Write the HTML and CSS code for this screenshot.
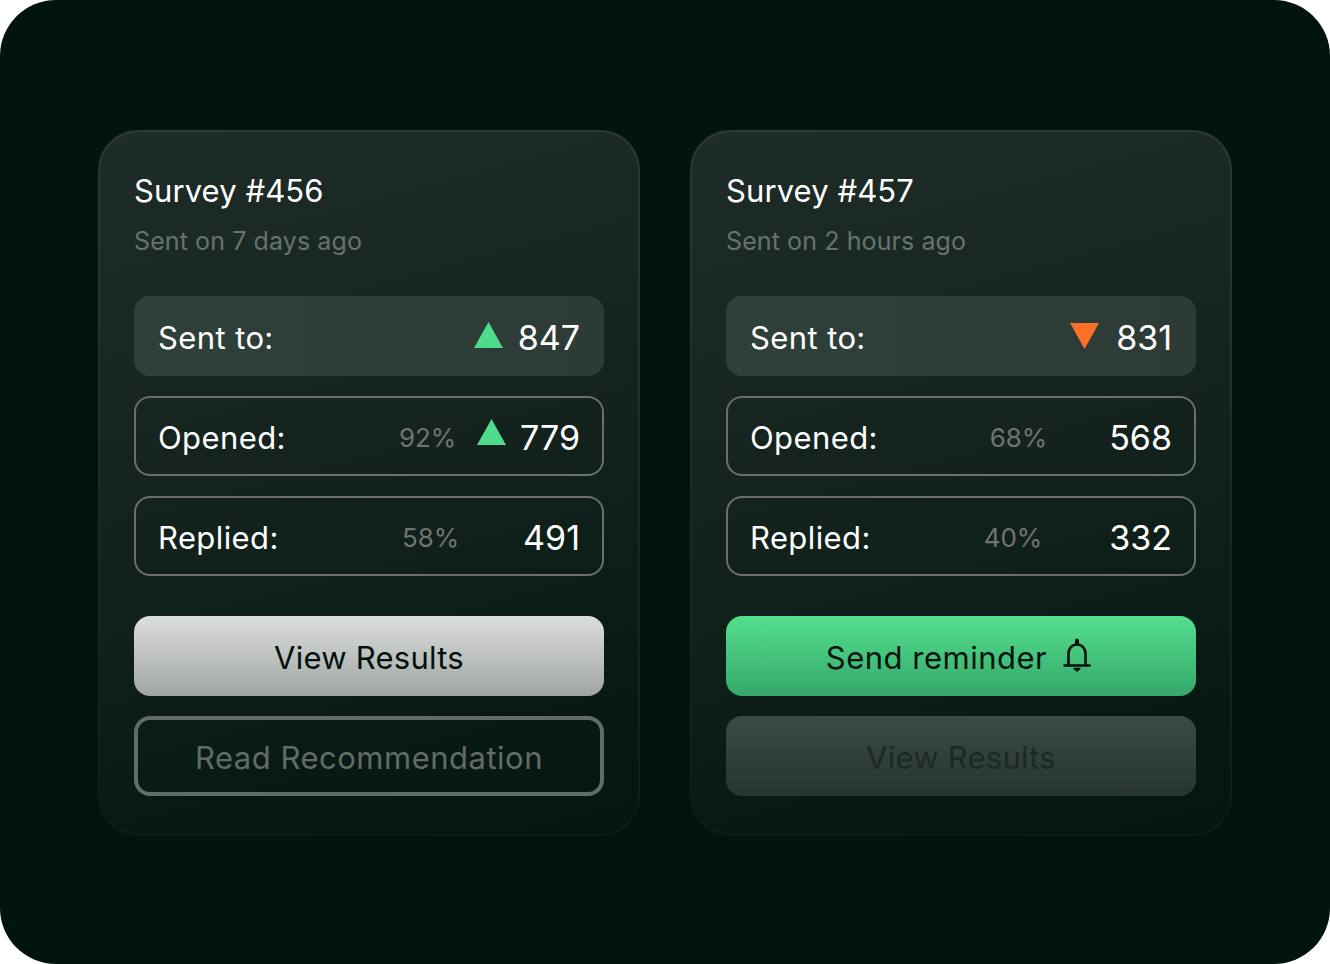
FILE: index.html
```html
<!DOCTYPE html>
<html lang="en">
<head>
<meta charset="utf-8">
<title>Surveys</title>
<link rel="stylesheet" href="styles.css">
</head>
<body>
<main class="stage">
  <section class="card">
    <h2 class="title">Survey #456</h2>
    <p class="sub">Sent on 7 days ago</p>
    <div class="rows">
      <div class="row row-fill"><span class="label">Sent to:</span><svg class="tri tri-up" viewBox="0 0 30 26" preserveAspectRatio="none"><path d="M15 0L30 26H0Z" fill="#4fdb8c"/></svg><span class="num">847</span></div>
      <div class="row row-line"><span class="label">Opened:</span><span class="pct">92%</span><svg class="tri tri-inline" viewBox="0 0 30 26" preserveAspectRatio="none"><path d="M15 0L30 26H0Z" fill="#4fdb8c"/></svg><span class="num">779</span></div>
      <div class="row row-line"><span class="label">Replied:</span><span class="pct pct-a">58%</span><span class="num">491</span></div>
    </div>
    <div class="actions">
      <button class="btn btn-grey"><span class="btn-text">View Results</span></button>
      <button class="btn btn-outline"><span class="btn-text">Read Recommendation</span></button>
    </div>
  </section>
  <section class="card">
    <h2 class="title">Survey #457</h2>
    <p class="sub">Sent on 2 hours ago</p>
    <div class="rows">
      <div class="row row-fill"><span class="label">Sent to:</span><svg class="tri tri-down" viewBox="0 0 30 26" preserveAspectRatio="none"><path d="M0 0H30L15 26Z" fill="#fb6f26"/></svg><span class="num">831</span></div>
      <div class="row row-line"><span class="label">Opened:</span><span class="pct pct-b">68%</span><span class="num">568</span></div>
      <div class="row row-line"><span class="label">Replied:</span><span class="pct pct-c">40%</span><span class="num">332</span></div>
    </div>
    <div class="actions">
      <button class="btn btn-green"><span class="btn-text">Send reminder</span>
        <svg class="bell" viewBox="0 0 28 36" fill="none" stroke="#04130d" stroke-width="2.6" stroke-linecap="round"><path d="M1.5 27.5H26.5"/><path d="M5.5 27V15.5C5.5 10.5 9 6.5 14 6.5S22.5 10.5 22.5 15.5V27"/><path d="M14 2.5V6" stroke-width="4"/><path d="M11 30.5H17L14 33Z" fill="#04130d" stroke-width="1.4" stroke-linejoin="round"/></svg>
      </button>
      <button class="btn btn-muted"><span class="btn-text">View Results</span></button>
    </div>
  </section>
</main>
</body>
</html>
```
FILE: styles.css
```css
* { box-sizing: border-box; }
html, body { margin: 0; padding: 0; background: #fff; }
body { width: 1330px; height: 964px; overflow: hidden; font-family: "Inter", "Liberation Sans", sans-serif; }
.stage {
  width: 1330px; height: 964px; border-radius: 56px; background: #01140e;
  display: flex; justify-content: center; gap: 50px; padding-top: 130px;
}
.card {
  width: 542px; height: 706px; padding: 34px 34px 0; border-radius: 40px;
  border: 2px solid transparent;
  background:
    linear-gradient(165deg, #1e2d28 0%, #14231e 45%, #03150f 100%) padding-box,
    linear-gradient(180deg, #2b3a35 0%, #0c1d17 100%) border-box;
}
.title { margin: 0; font-size: 31px; line-height: 50px; font-weight: 400; color: #fff; height: 50px; letter-spacing: 0.1px; }
.sub { margin: 0; height: 50px; font-size: 25px; line-height: 50px; letter-spacing: 0.1px; color: #66736e; }
.rows { display: flex; flex-direction: column; gap: 20px; margin-top: 30px; }
.row { height: 80px; border-radius: 16px; display: flex; align-items: center; padding: 0 24px; color: #fff; }
.row-fill { background: linear-gradient(90deg, #2f3f39, #2d3b36); }
.row-line { border: 2px solid #6a6e6c; padding: 0 22px; }
.label { font-size: 31px; margin-right: auto; position: relative; top: 1px; letter-spacing: 0.4px; }
.num { font-size: 34px; position: relative; top: 1px; }
.pct { font-size: 26px; color: #6f7471; position: relative; top: 1px; letter-spacing: -0.1px; }
.pct-a { margin-right: 64px; }
.pct-b { margin-right: 62px; }
.pct-c { margin-right: 67px; }
.tri { width: 29px; height: 26px; position: relative; }
.tri-up { margin-right: 15px; top: -1px; }
.tri-inline { margin-left: 21px; margin-right: 14px; top: -4px; }
.tri-down { margin-right: 17px; top: 0; }
.actions { display: flex; flex-direction: column; gap: 20px; margin-top: 40px; }
.btn { height: 80px; border-radius: 16px; border: 0; font: inherit; font-size: 31px; letter-spacing: 0.25px; display: flex; align-items: center; justify-content: center; gap: 16px; padding: 0; }
.btn-text { padding-top: 2px; }
.btn-grey { background: linear-gradient(180deg, #dcdedd, #9fa5a2); color: #04100c; }
.btn-outline { background: transparent; border: 4px solid #606c68; color: #606c68; letter-spacing: 0.5px; }
.btn-green { background: linear-gradient(180deg, #53df8e, #35a86a); color: #04130d; letter-spacing: 0.5px; padding-right: 5px; }
.btn-muted { background: linear-gradient(180deg, #3c4a45, #26352f); color: #1a2924; }
.bell { width: 28px; height: 36px; }
```
